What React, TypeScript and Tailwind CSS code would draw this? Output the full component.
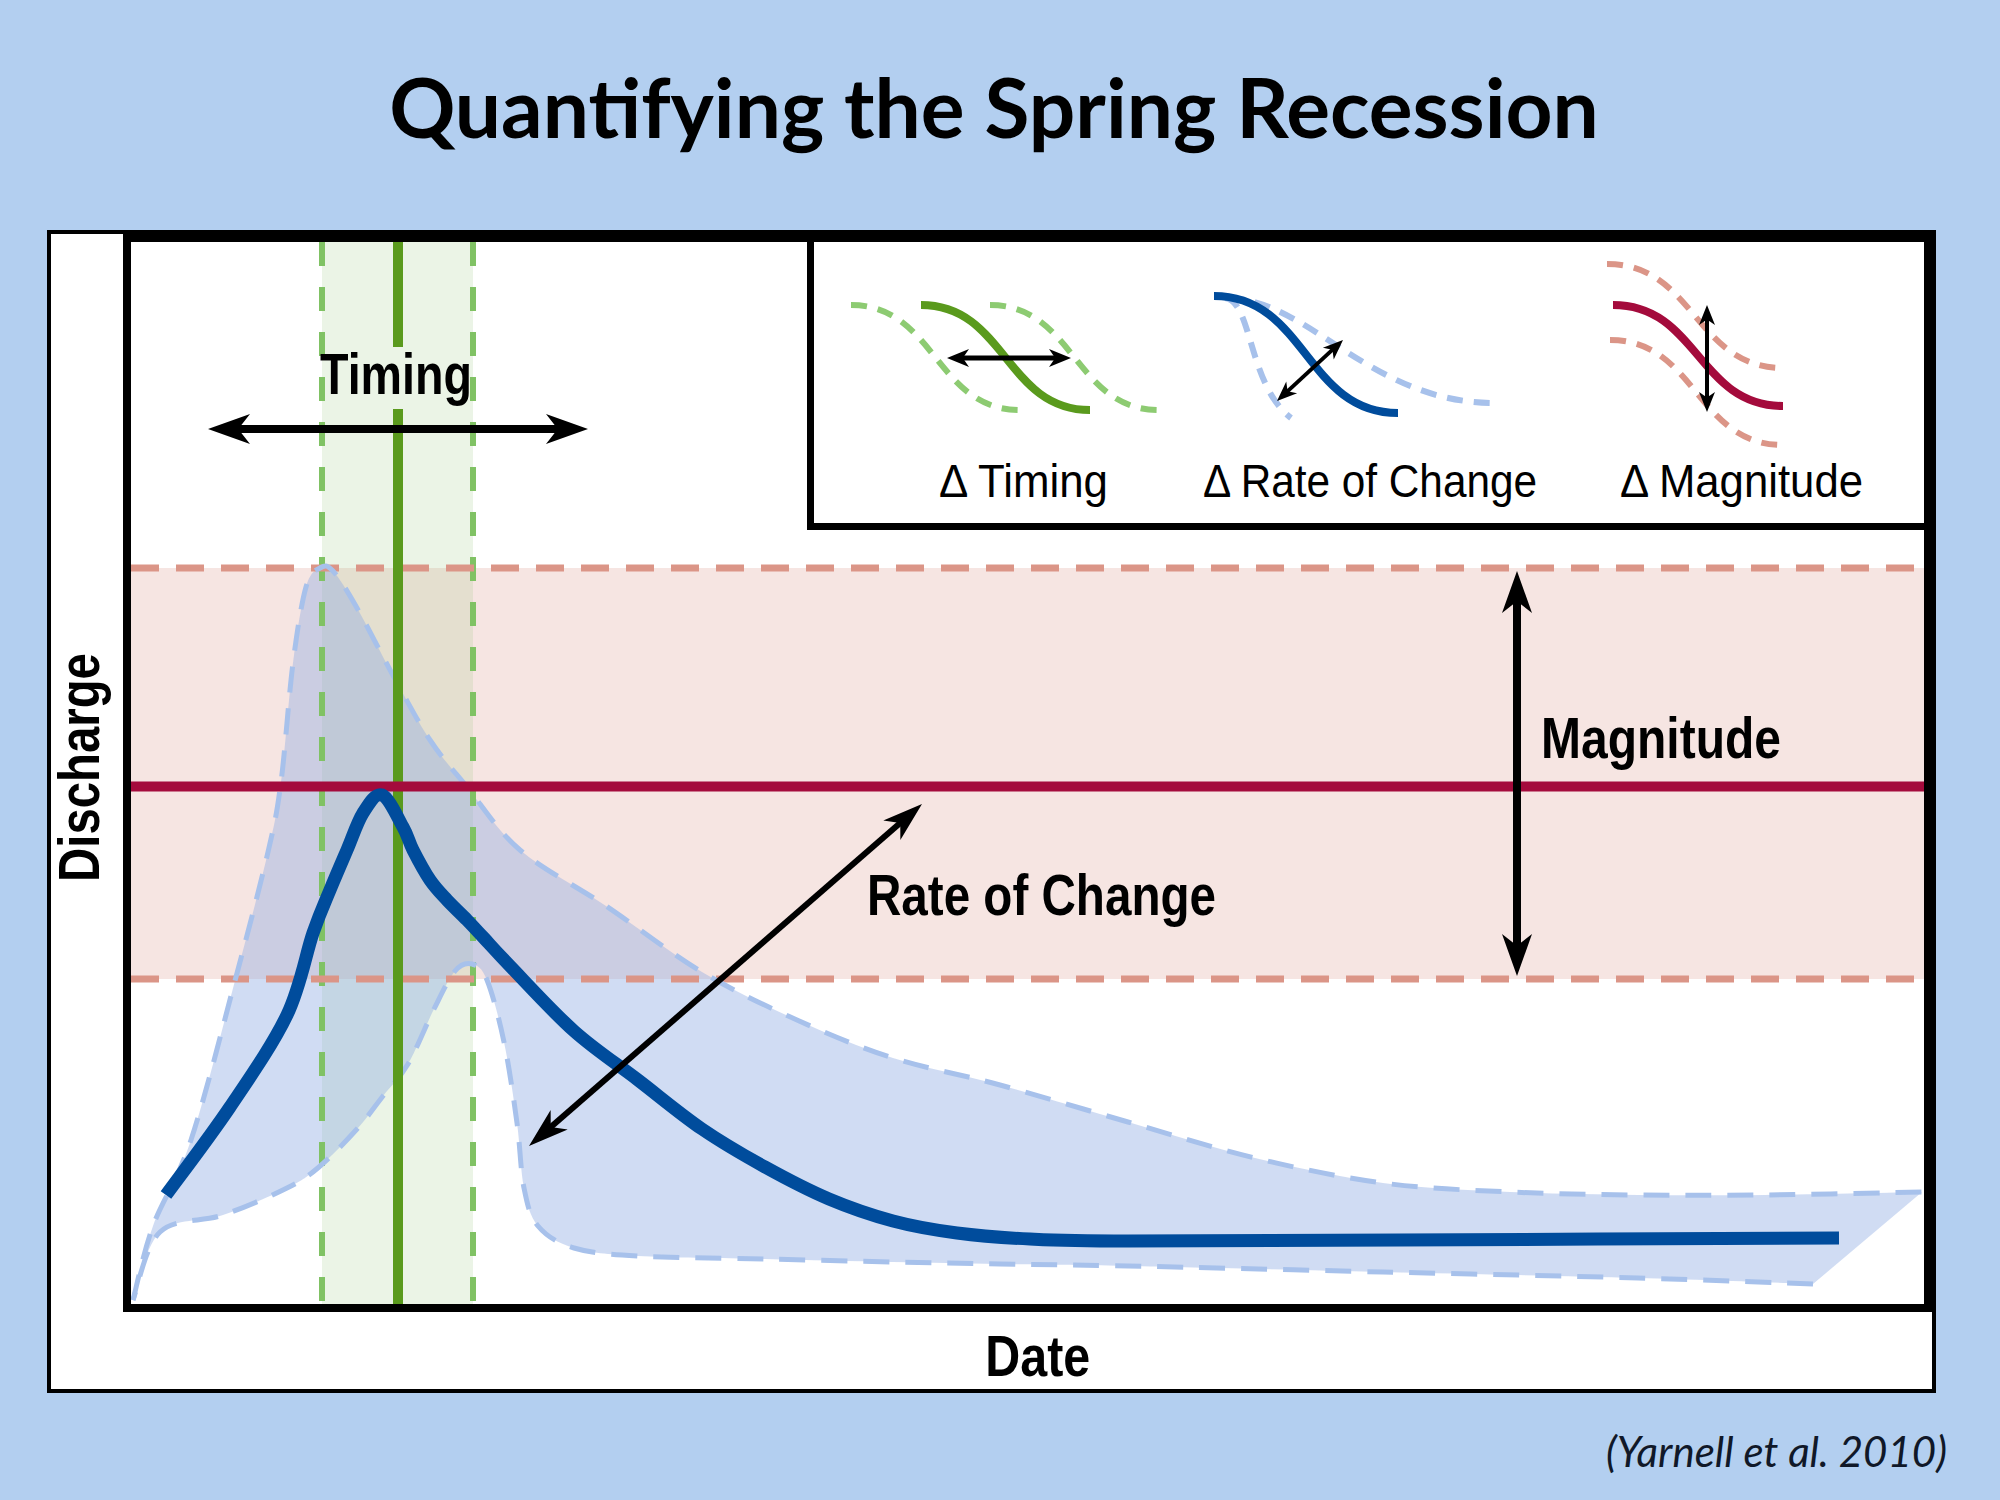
import React from "react";

type Pt = [number, number];

// catmull-rom through the points, as cubic bezier segments
function smooth(pts: Pt[], move = true): string {
  let d = move ? `M${pts[0][0]} ${pts[0][1]}` : "";
  for (let i = 0; i < pts.length - 1; i++) {
    const p0 = pts[i - 1] || pts[i];
    const p1 = pts[i];
    const p2 = pts[i + 1];
    const p3 = pts[i + 2] || p2;
    const c1x = p1[0] + (p2[0] - p0[0]) / 6;
    const c1y = p1[1] + (p2[1] - p0[1]) / 6;
    const c2x = p2[0] - (p3[0] - p1[0]) / 6;
    const c2y = p2[1] - (p3[1] - p1[1]) / 6;
    d += ` C${c1x.toFixed(1)} ${c1y.toFixed(1)} ${c2x.toFixed(1)} ${c2y.toFixed(1)} ${p2[0]} ${p2[1]}`;
  }
  return d;
}

// horizontal-tangent S curve
function sig(x0: number, y0: number, x1: number, y1: number, k = 0.5) {
  const w = x1 - x0;
  return `M${x0} ${y0} C${x0 + w * k} ${y0} ${x1 - w * k} ${y1} ${x1} ${y1}`;
}

function Arrow({ x1, y1, x2, y2, w, head, half }: { x1: number; y1: number; x2: number; y2: number; w: number; head: number; half: number }) {
  const dx = x2 - x1;
  const dy = y2 - y1;
  const len = Math.hypot(dx, dy);
  const ux = dx / len;
  const uy = dy / len;
  const nx = -uy;
  const ny = ux;
  const tip = (tx: number, ty: number, dirx: number, diry: number) => {
    const bx = tx - dirx * head;
    const by = ty - diry * head;
    const mx = tx - dirx * head * 0.72;
    const my = ty - diry * head * 0.72;
    return `${tx},${ty} ${bx + nx * half},${by + ny * half} ${mx},${my} ${bx - nx * half},${by - ny * half}`;
  };
  return (
    <g>
      <line
        x1={x1 + ux * head * 0.6}
        y1={y1 + uy * head * 0.6}
        x2={x2 - ux * head * 0.6}
        y2={y2 - uy * head * 0.6}
        stroke="#000"
        strokeWidth={w}
      />
      <polygon points={tip(x2, y2, ux, uy)} fill="#000" />
      <polygon points={tip(x1, y1, -ux, -uy)} fill="#000" />
    </g>
  );
}

const upper: Pt[] = [
  [133, 1300], [153, 1226], [191, 1140], [236, 977], [268, 852], [281, 782], [293, 663], [306, 587],
  [320, 568], [333, 571], [357, 608], [395, 679], [430, 740], [467, 787], [520, 850], [606, 906],
  [702, 972], [797, 1020], [893, 1058], [1000, 1085], [1128, 1122], [1255, 1158], [1383, 1183],
  [1510, 1192], [1638, 1195], [1765, 1195], [1922, 1192],
];

const lower: Pt[] = [
  [1813, 1284], [1638, 1278], [1383, 1272], [1128, 1266], [1000, 1264], [893, 1262], [765, 1259],
  [638, 1256], [574, 1248], [538, 1226], [524, 1188], [517, 1123], [504, 1042], [487, 980], [472, 964],
  [455, 971], [434, 1009], [408, 1064], [383, 1096], [357, 1129], [319, 1167], [287, 1188], [223, 1215],
  [160, 1232], [133, 1300],
];

const mainCurve: Pt[] = [
  [166, 1195], [230, 1107], [287, 1015], [313, 933], [330, 890], [347, 850], [363, 813],
  [382, 795], [403, 827], [413, 850], [430, 880], [447, 900], [467, 920], [483, 937],
  [510, 966], [574, 1031], [638, 1080], [702, 1129], [765, 1167], [829, 1199], [893, 1221], [957, 1233],
  [1030, 1239], [1128, 1241], [1400, 1240], [1839, 1238],
];

const cond = "Liberation Sans, Arial, sans-serif";

function Plot() {
  const envelope = smooth(upper) + " L1813 1284" + smooth(lower, false) + " Z";
  return (
    <svg width={1793} height={1062} viewBox="131 242 1793 1062" className="block">
      <rect x={131} y={242} width={1793} height={1062} fill="#ffffff" />
      {/* magnitude band */}
      <rect x={131} y={568} width={1793} height={411} fill="#f6e5e2" />
      {/* timing band */}
      <rect x={322} y={242} width={151} height={1062} fill="#a3cc8c" opacity={0.22} />
      {/* envelope */}
      <path d={envelope} fill="#8fabe2" opacity={0.42} />
      <line x1={322} y1={242} x2={322} y2={1304} stroke="#80c264" strokeWidth={6} strokeDasharray="24 21" />
      <line x1={473} y1={242} x2={473} y2={1304} stroke="#80c264" strokeWidth={6} strokeDasharray="24 21" />
      <line x1={131} y1={568} x2={1924} y2={568} stroke="#db9587" strokeWidth={7} strokeDasharray="28 17" />
      <line x1={131} y1={979} x2={1924} y2={979} stroke="#db9587" strokeWidth={7} strokeDasharray="28 17" />
      <path d={smooth(upper)} fill="none" stroke="#a7c1eb" strokeWidth={5} strokeDasharray="26 16" />
      <path d={smooth(lower)} fill="none" stroke="#a7c1eb" strokeWidth={5} strokeDasharray="26 16" />
      <line x1={398} y1={242} x2={398} y2={347} stroke="#5a9a1d" strokeWidth={10} />
      <line x1={398} y1={409} x2={398} y2={1304} stroke="#5a9a1d" strokeWidth={10} />
      <line x1={131} y1={786.5} x2={1924} y2={786.5} stroke="#a40b3c" strokeWidth={10} />
      <path d={smooth(mainCurve)} fill="none" stroke="#004c9c" strokeWidth={13} strokeLinejoin="round" />

      <Arrow x1={208} y1={429} x2={588} y2={429} w={8} head={42} half={15} />
      <Arrow x1={1517} y1={571} x2={1517} y2={976} w={8} head={42} half={15} />
      <Arrow x1={529} y1={1146} x2={922} y2={804} w={6} head={40} half={13} />

      <text x={320} y={394} fontFamily={cond} fontWeight={700} fontSize={57} textLength={152} lengthAdjust="spacingAndGlyphs">
        Timing
      </text>
      <text x={1541} y={758} fontFamily={cond} fontWeight={700} fontSize={57} textLength={240} lengthAdjust="spacingAndGlyphs">
        Magnitude
      </text>
      <text x={867} y={915} fontFamily={cond} fontWeight={700} fontSize={57} textLength={349} lengthAdjust="spacingAndGlyphs">
        Rate of Change
      </text>

      {/* legend inset */}
      <rect x={810} y={242} width={1114} height={284} fill="#ffffff" />
      <line x1={810.5} y1={242} x2={810.5} y2={530} stroke="#000" strokeWidth={7} />
      <line x1={807} y1={526.5} x2={1924} y2={526.5} stroke="#000" strokeWidth={7} />

      <path d={sig(851, 305, 1020, 410)} fill="none" stroke="#8dcb72" strokeWidth={6} strokeDasharray="16 11" />
      <path d={sig(990, 305, 1159, 410)} fill="none" stroke="#8dcb72" strokeWidth={6} strokeDasharray="16 11" />
      <path d={sig(921, 305, 1090, 410)} fill="none" stroke="#5a9a1d" strokeWidth={8} />
      <Arrow x1={947} y1={358} x2={1071} y2={358} w={5} head={22} half={9} />

      <path d="M1225 298 C1252 300 1248 385 1291 418" fill="none" stroke="#a7c1eb" strokeWidth={6} strokeDasharray="16 11" />
      <path d="M1228 298 C1310 300 1370 402 1493 403" fill="none" stroke="#a7c1eb" strokeWidth={6} strokeDasharray="16 11" />
      <path d={sig(1214, 296, 1398, 413)} fill="none" stroke="#004c9c" strokeWidth={8} />
      <Arrow x1={1277} y1={401} x2={1343} y2={340} w={4} head={20} half={8} />

      <path d={sig(1607, 264, 1783, 368)} fill="none" stroke="#db9587" strokeWidth={6} strokeDasharray="16 11" />
      <path d={sig(1610, 340, 1783, 445)} fill="none" stroke="#db9587" strokeWidth={6} strokeDasharray="16 11" />
      <path d={sig(1613, 305, 1783, 406)} fill="none" stroke="#a40b3c" strokeWidth={8} />
      <Arrow x1={1707} y1={305} x2={1707} y2={412} w={4} head={20} half={8} />

      <text x={939} y={497} fontFamily={cond} fontSize={46} textLength={169} lengthAdjust="spacingAndGlyphs">
        Δ Timing
      </text>
      <text x={1203} y={497} fontFamily={cond} fontSize={46} textLength={334} lengthAdjust="spacingAndGlyphs">
        Δ Rate of Change
      </text>
      <text x={1620} y={497} fontFamily={cond} fontSize={46} textLength={243} lengthAdjust="spacingAndGlyphs">
        Δ Magnitude
      </text>
    </svg>
  );
}

export default function App() {
  return (
    <div className="w-[2000px] h-[1500px] overflow-hidden bg-[#b3cff0] text-black">
      <div className="h-[230px]">
        <h1 className="pt-[65px] pr-[12px] text-center text-[82px] leading-none font-bold font-['Lato',sans-serif]">
          Quantifying the Spring Recession
        </h1>
      </div>

      <div className="ml-[47px] w-[1889px] h-[1163px] border-4 border-black bg-white flex flex-col">
        <div className="flex h-[1078px]">
          <div className="w-[72px] flex items-center justify-center">
            <span className="whitespace-nowrap -rotate-90 scale-x-[0.83] -translate-x-[7px] -translate-y-[6px] text-[57px] leading-none font-bold font-['Liberation_Sans',Arial,sans-serif]">
              Discharge
            </span>
          </div>
          <div className="flex-1 border-8 border-black">
            <Plot />
          </div>
        </div>
        <div className="flex-1 flex justify-center pl-[93px] pt-[16px]">
          <span className="whitespace-nowrap scale-x-[0.85] text-[57px] leading-none font-bold font-['Liberation_Sans',Arial,sans-serif]">
            Date
          </span>
        </div>
      </div>

      <div className="pt-[37px] pr-[53px] text-right text-[42px] leading-none italic text-[#101828] font-['Lato',sans-serif]">
        (Yarnell et al. 2010)
      </div>
    </div>
  );
}
